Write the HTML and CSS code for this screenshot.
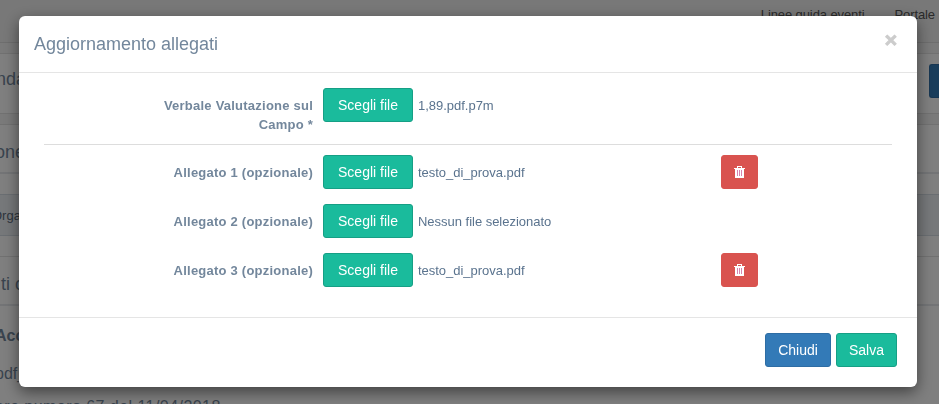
FILE: index.html
```html
<!DOCTYPE html>
<html lang="it">
<head>
  <meta charset="UTF-8">
  <meta name="viewport" content="width=device-width, initial-scale=1.0">
  <title>Aggiornamento allegati</title>
  <link rel="stylesheet" href="styles.css">
</head>
<body class="modal-open">
  <div class="page">
    <nav class="topbar">
      <a class="topbar-link">Linee guida eventi</a>
      <a class="topbar-link">Portale</a>
    </nav>
    <section class="panel panel-title">
      <span class="panel-text">nda</span>
      <span class="panel-btn"></span>
    </section>
    <section class="panel panel-heading">one</section>
    <div class="table-wrap">
      <div class="table-head">Orga</div>
    </div>
    <section class="panel-heading attachments-heading">ti c</section>
    <div class="attachments">
      <strong>Acc</strong>
      <span>pdf_</span>
      <span class="attachments-note">are numero 67 del 11/04/2018</span>
    </div>
  </div>

  <div class="modal-backdrop">
    <div class="modal">
      <div class="modal-header">
        <h4 class="modal-title">Aggiornamento allegati</h4>
        <button type="button" class="close" aria-label="Close">&times;</button>
      </div>
      <div class="modal-body">
        <div class="form-group first">
          <label class="control-label">Verbale Valutazione sul Campo *</label>
          <button type="button" class="btn btn-success btn-file">Scegli file</button>
          <span class="file-name">1,89.pdf.p7m</span>
        </div>
        <hr class="divider">
        <div class="form-group">
          <label class="control-label">Allegato 1 (opzionale)</label>
          <button type="button" class="btn btn-success btn-file">Scegli file</button>
          <span class="file-name">testo_di_prova.pdf</span>
          <button type="button" class="btn btn-danger" aria-label="Elimina">
            <svg class="icon-trash" viewBox="0 0 11 12" shape-rendering="crispEdges">
              <path fill="#fff" fill-rule="evenodd" d="M3 0h5v2h3v1h-1v9H1V3H0V2h3zM4 1v1h3V1z"/>
              <path fill="#d884b0" d="M3 4h1v6H3zM5 4h1v6H5zM7 4h1v6H7z"/>
            </svg>
          </button>
        </div>
        <div class="form-group">
          <label class="control-label">Allegato 2 (opzionale)</label>
          <button type="button" class="btn btn-success btn-file">Scegli file</button>
          <span class="file-name">Nessun file selezionato</span>
        </div>
        <div class="form-group">
          <label class="control-label">Allegato 3 (opzionale)</label>
          <button type="button" class="btn btn-success btn-file">Scegli file</button>
          <span class="file-name">testo_di_prova.pdf</span>
          <button type="button" class="btn btn-danger" aria-label="Elimina">
            <svg class="icon-trash" viewBox="0 0 11 12" shape-rendering="crispEdges">
              <path fill="#fff" fill-rule="evenodd" d="M3 0h5v2h3v1h-1v9H1V3H0V2h3zM4 1v1h3V1z"/>
              <path fill="#d884b0" d="M3 4h1v6H3zM5 4h1v6H5zM7 4h1v6H7z"/>
            </svg>
          </button>
        </div>
      </div>
      <div class="modal-footer">
        <button type="button" class="btn btn-primary">Chiudi</button>
        <button type="button" class="btn btn-success btn-save">Salva</button>
      </div>
    </div>
  </div>
</body>
</html>
```
FILE: styles.css
```css
* {
  box-sizing: border-box;
}

body {
  margin: 0;
  font-family: "Liberation Sans", Arial, sans-serif;
  font-size: 14px;
  line-height: 20px;
  color: #73879c;
  background: #f4f4f4;
}

.modal-open {
  height: 404px;
  overflow: hidden;
}

/* page behind the dialog */
.page {
  height: 404px;
  overflow: hidden;
  white-space: nowrap;
}

.topbar {
  display: flex;
  justify-content: flex-end;
  gap: 30px;
  height: 43px;
  padding: 5px 4px 0 0;
  border-bottom: 1px solid #dcdcdc;
  background: #f1f1f1;
}

.topbar-link {
  color: #555;
  font-size: 13px;
  letter-spacing: -0.1px;
}

.panel {
  border-top: 1px solid #e3e3e3;
  background: #fff;
}

.panel-title {
  display: flex;
  justify-content: space-between;
  height: 61px;
  margin: 10px 0;
  padding-top: 10px;
  border-bottom: 1px solid #e3e3e3;
  font-size: 18px;
}

.panel-text {
  margin-left: -4px;
  padding-top: 5px;
}

.panel-btn {
  width: 10px;
  height: 34px;
  border: 1px solid #2e6da4;
  border-right: none;
  border-radius: 3px 0 0 3px;
  background: #337ab7;
}

.panel-heading {
  height: 50px;
  padding-top: 17px;
  text-indent: -5px;
  border-bottom: 2px solid #e6e9ed;
  background: #fff;
  font-size: 18px;
}

.table-wrap {
  padding: 20px 0;
  background: #fff;
}

.table-head {
  height: 42px;
  padding-top: 11px;
  text-indent: -8px;
  border: 1px solid #d5dde4;
  border-width: 1px 0;
  background: #ecf0f4;
  color: #5b6b7b;
  font-size: 13px;
}

.attachments-heading {
  border-top: 1px solid #e3e3e3;
  text-indent: 1px;
}

.attachments {
  display: flex;
  flex-direction: column;
  gap: 18px;
  height: 120px;
  padding-top: 20px;
  text-indent: -5px;
  background: #fff;
  font-size: 16px;
}

.attachments-note {
  margin-top: -5px;
  letter-spacing: 0.45px;
}

/* dialog */
.modal-backdrop {
  position: fixed;
  inset: 0;
  padding: 16px 22px 0 19px;
  background: rgba(0, 0, 0, 0.5);
}

.modal {
  height: 371px;
  border-radius: 6px;
  background: #fff;
  box-shadow: 0 5px 15px rgba(0, 0, 0, 0.5);
}

.modal-header {
  display: flex;
  justify-content: space-between;
  height: 57px;
  padding: 15px 20px 0 15px;
  border-bottom: 1px solid #e5e5e5;
}

.modal-title {
  margin: 0;
  font-size: 18px;
  font-weight: 400;
  line-height: 26px;
}

.close {
  height: 18px;
  padding: 0;
  border: 0;
  background: none;
  color: #ccc;
  font-family: inherit;
  font-size: 21px;
  font-weight: 700;
  line-height: 18px;
  -webkit-text-stroke: 1px #ccc;
}

.modal-body {
  height: 244px;
  padding: 15px 25px 0;
}

.form-group {
  display: flex;
  align-items: flex-start;
  margin-bottom: 15px;
}

.form-group.first {
  height: 56px;
  margin-bottom: 0;
}

.control-label {
  width: 269px;
  margin-right: 10px;
  padding: 8px 0 0 100px;
  font-size: 13px;
  font-weight: 700;
  line-height: 19px;
  text-align: right;
  letter-spacing: 0.23px;
}

.divider {
  height: 1px;
  margin: 0 0 10px;
  border: 0;
  background: #ddd;
}

.file-name {
  width: 308px;
  padding: 8px 0 0 5px;
  color: #5a738e;
  font-size: 13px;
  letter-spacing: -0.02px;
}

.btn {
  height: 34px;
  padding: 0 12px;
  border: 1px solid transparent;
  border-radius: 3px;
  color: #fff;
  font-family: inherit;
  font-size: 14px;
  line-height: 20px;
}

.btn-file {
  width: 90px;
  padding: 0;
}

.btn-success {
  border-color: #169f85;
  background: #1abb9c;
}

.btn-primary {
  width: 66px;
  border-color: #2e6da4;
  background: #337ab7;
}

.btn-save {
  width: 61px;
}

.btn-danger {
  width: 37px;
  border-color: #d9534f;
  background: #d9534f;
}

.icon-trash {
  display: block;
  width: 11px;
  height: 12px;
}

.modal-footer {
  display: flex;
  justify-content: flex-end;
  gap: 5px;
  padding: 15px 20px;
  border-top: 1px solid #e5e5e5;
}
```
